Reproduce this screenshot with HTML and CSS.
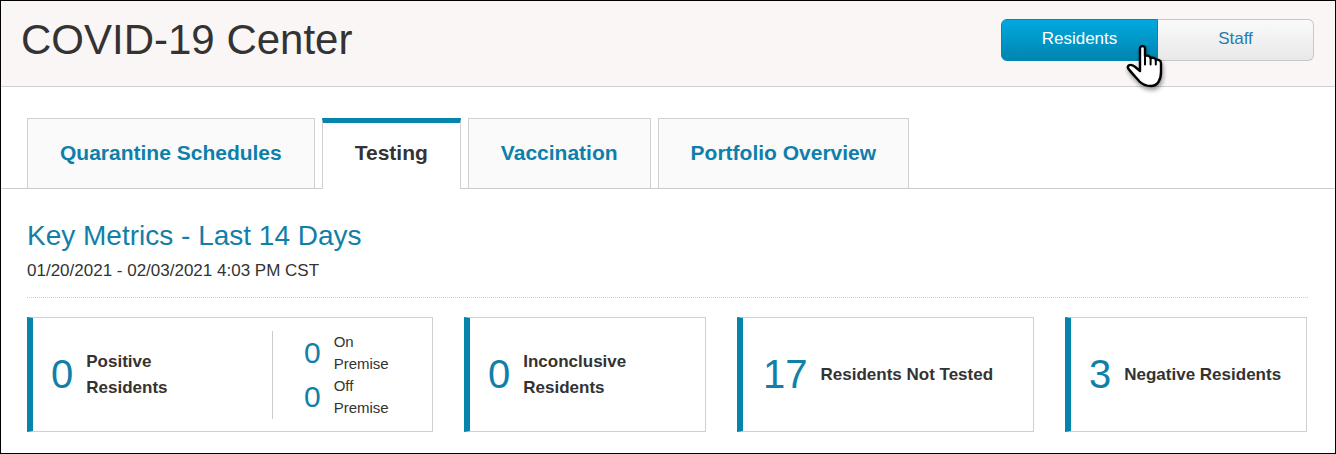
FILE: index.html
```html
<!DOCTYPE html>
<html lang="en">
<head>
    <meta charset="UTF-8">
    <meta name="viewport" content="width=device-width, initial-scale=1.0">
    <title>COVID-19 Center</title>
    <link rel="stylesheet" href="styles.css">
</head>
<body>
    <header class="header">
        <h1>COVID-19 Center</h1>
        <div class="toggle">
            <button type="button" class="toggle-btn active">Residents
                <svg class="pointer" viewBox="0 0 38 46" width="38" height="46" aria-hidden="true">
                    <path fill="#fff" stroke="#000" stroke-width="2.4" stroke-linejoin="round" d="M14 27V4.6a2.5 2.5 0 0 1 5 0V12c2-.8 5.2-.4 5.6 2c2-.6 4.8-.2 5.2 1.8c2.5-.5 5.2.5 5.2 3.2V28C35 36 31.5 42 25 42C19 42 16 40 13.5 37.5C10 33.5 3.5 26.5 2.2 24.5C.8 21.5 4 20.2 6.5 21.3C9.5 22.8 11.5 25 14 27z"/>
                    <path fill="none" stroke="#000" stroke-width="2" stroke-linecap="round" d="M19 12v8.5M24.6 14v6.5M29.8 16v4.5"/>
                </svg>
            </button>
            <button type="button" class="toggle-btn">Staff</button>
        </div>
    </header>

    <nav class="tabs">
        <a href="#quarantine" class="tab">Quarantine Schedules</a>
        <a href="#testing" class="tab active">Testing</a>
        <a href="#vaccination" class="tab">Vaccination</a>
        <a href="#portfolio" class="tab">Portfolio Overview</a>
    </nav>

    <main class="content" id="testing">
        <div class="metrics-header">
            <h2>Key Metrics - Last 14 Days</h2>
            <p>01/20/2021 - 02/03/2021 4:03 PM CST</p>
        </div>

        <div class="cards">
            <div class="card">
                <span class="number">0</span>
                <span class="label">Positive<br>Residents</span>
                <div class="breakdown">
                    <div class="breakdown-row">
                        <span class="small-number">0</span>
                        <span>On<br>Premise</span>
                    </div>
                    <div class="breakdown-row">
                        <span class="small-number">0</span>
                        <span>Off<br>Premise</span>
                    </div>
                </div>
            </div>
            <div class="card">
                <span class="number">0</span>
                <span class="label">Inconclusive<br>Residents</span>
            </div>
            <div class="card wide">
                <span class="number">17</span>
                <span class="label">Residents Not Tested</span>
            </div>
            <div class="card">
                <span class="number">3</span>
                <span class="label">Negative Residents</span>
            </div>
        </div>
    </main>
</body>
</html>
```
FILE: styles.css
```css
* {
    box-sizing: border-box;
}

body {
    font-family: "Liberation Sans", Arial, sans-serif;
    font-size: 17px;
    margin: 0;
    min-height: 100vh;
    border: 1px solid #000;
    background-color: #fff;
    color: #333;
}

h1, h2, p {
    margin: 0;
    font-weight: normal;
}

.header {
    display: flex;
    justify-content: space-between;
    align-items: flex-start;
    padding: 18px 21px 0 20px;
    height: 86px;
    background-color: #faf6f5;
    border-bottom: 1px solid #d0d0d0;
}

h1 {
    font-size: 42px;
    line-height: 42px;
}

.toggle {
    display: flex;
}

.toggle-btn {
    position: relative;
    width: 156px;
    height: 42px;
    padding: 0 0 2px;
    border: 1px solid #c8c8c8;
    border-left: 0;
    border-radius: 0 6px 6px 0;
    background: linear-gradient(#fafafa, #e8e8e8);
    font-family: inherit;
    font-size: 17px;
    color: #2a7ab0;
    cursor: pointer;
}

.toggle-btn.active {
    width: 157px;
    border: 1px solid #0088b5;
    border-radius: 6px 0 0 6px;
    background: linear-gradient(#00a9e0, #0085b0);
    color: #fff;
}

/* hand cursor over the selected button */
.pointer {
    position: absolute;
    left: 124px;
    top: 24px;
    z-index: 1;
    overflow: visible;
    filter: drop-shadow(1px 3px 2px rgba(0, 0, 0, 0.4));
    pointer-events: none;
}

.tabs {
    display: flex;
    gap: 7px;
    margin-top: 31px;
    padding: 0 26px;
    border-bottom: 1px solid #ccc;
}

.tab {
    height: 70px;
    padding: 0 32px;
    border: 1px solid #d0d0d0;
    border-bottom: 0;
    background-color: #fafafa;
    color: #0e7fab;
    font-size: 21px;
    font-weight: bold;
    line-height: 68px;
    text-decoration: none;
}

.tab.active {
    height: 71px;
    margin-bottom: -1px;
    border-top: 5px solid #0585ac;
    background-color: #fff;
    color: #333;
    line-height: 60px;
}

.content {
    padding: 28px 27px 20px 26px;
}

.metrics-header {
    padding-bottom: 12px;
    border-bottom: 1px dotted #ccc;
}

h2 {
    color: #127fa8;
    font-size: 28px;
    line-height: 38px;
}

.metrics-header p {
    line-height: 28px;
    margin-top: 2px;
}

.cards {
    display: grid;
    grid-template-columns: 406fr 242fr 297fr 242fr;
    gap: 31px;
    margin-top: 19px;
    padding-right: 1px;
}

.card {
    display: flex;
    align-items: center;
    min-height: 115px;
    padding: 12px 0 12px 18px;
    border: 1px solid #d0d0d0;
    border-left: 6px solid #0585ac;
}

.card.wide {
    padding-left: 20px;
}

.number {
    margin-right: 13px;
    color: #127fa8;
    font-size: 40px;
}

.label {
    font-weight: bold;
    line-height: 26px;
}

.breakdown {
    width: 160px;
    margin-left: auto;
    padding-left: 31px;
    border-left: 1px solid #ccc;
    font-size: 15px;
    line-height: 22px;
}

.breakdown-row {
    display: flex;
    align-items: center;
    gap: 13px;
}

.small-number {
    color: #127fa8;
    font-size: 30px;
}
```
